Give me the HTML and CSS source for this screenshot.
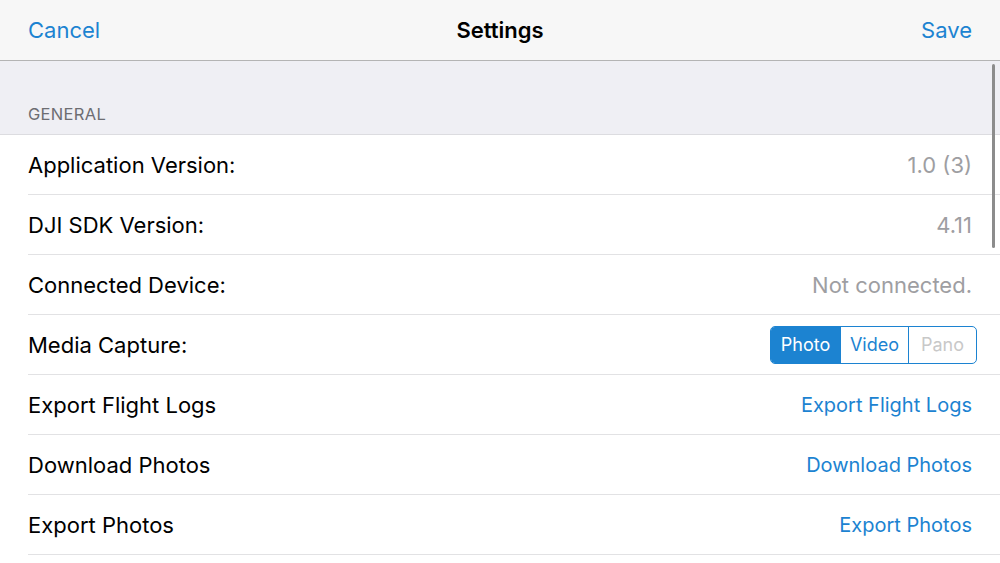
FILE: index.html
```html
<!DOCTYPE html>
<html lang="en">
<head>
    <meta charset="UTF-8">
    <meta name="viewport" content="width=device-width, initial-scale=1.0">
    <title>Settings</title>
    <link rel="stylesheet" href="styles.css">
</head>
<body>
    <div class="navbar">
        <a class="nav-btn" href="#">Cancel</a>
        <div class="nav-title">Settings</div>
        <a class="nav-btn" href="#">Save</a>
    </div>
    <div class="content">
        <div class="section-header">GENERAL</div>
        <div class="row">
            <span class="label">Application Version:</span>
            <span class="value">1.0 (3)</span>
        </div>
        <div class="row">
            <span class="label">DJI SDK Version:</span>
            <span class="value">4.11</span>
        </div>
        <div class="row">
            <span class="label">Connected Device:</span>
            <span class="value">Not connected.</span>
        </div>
        <div class="row">
            <span class="label">Media Capture:</span>
            <div class="segmented">
                <span class="segment active">Photo</span>
                <span class="segment">Video</span>
                <span class="segment disabled">Pano</span>
            </div>
        </div>
        <div class="row">
            <span class="label">Export Flight Logs</span>
            <a class="action" href="#">Export Flight Logs</a>
        </div>
        <div class="row">
            <span class="label">Download Photos</span>
            <a class="action" href="#">Download Photos</a>
        </div>
        <div class="row">
            <span class="label">Export Photos</span>
            <a class="action" href="#">Export Photos</a>
        </div>
        <div class="scroll-indicator"></div>
    </div>
</body>
</html>
```

FILE: styles.css
```css
body {
    font-family: Inter, "Noto Sans", sans-serif;
    margin: 0;
    padding: 0;
    background-color: #fff;
    color: #000;
    overflow: hidden;
}
.navbar {
    height: 60px;
    background-color: #f7f7f7;
    border-bottom: 1px solid #b4b4b4;
    display: flex;
    align-items: center;
    justify-content: space-between;
    padding: 0 28px;
}
.nav-btn {
    color: #1c83d1;
    text-decoration: none;
    font-size: 22px;
    width: 120px;
}
.nav-btn:last-child {
    text-align: right;
}
.nav-title {
    font-size: 22px;
    font-weight: 600;
}
.content {
    position: relative;
}
.section-header {
    background-color: #efeff4;
    height: 74px;
    box-sizing: border-box;
    padding: 0 28px 10px;
    display: flex;
    align-items: flex-end;
    font-size: 16.5px;
    color: #6d6d72;
    letter-spacing: 0.3px;
    border-bottom: 1px solid #dcdce0;
}
.row {
    height: 59px;
    margin-left: 28px;
    padding-right: 28px;
    border-bottom: 1px solid #e2e2e4;
    display: flex;
    align-items: center;
    justify-content: space-between;
    font-size: 22px;
}
.value {
    color: #9e9ea2;
}
.action {
    color: #1c83d1;
    text-decoration: none;
    font-size: 20px;
}
.segmented {
    display: flex;
    border: 1px solid #1c83d1;
    border-radius: 5px;
    overflow: hidden;
    margin-right: -5px;
    height: 38px;
    box-sizing: border-box;
}
.segment {
    width: 67px;
    display: flex;
    align-items: center;
    justify-content: center;
    font-size: 18px;
    color: #1c83d1;
    border-left: 1px solid #1c83d1;
}
.segment:first-child {
    border-left: none;
    width: 69px;
}
.segment.active {
    background-color: #1c83d1;
    color: #fff;
}
.segment.disabled {
    color: #c8c8c8;
}
.scroll-indicator {
    position: absolute;
    top: 3px;
    right: 5px;
    width: 3px;
    height: 184px;
    border-radius: 2px;
    background-color: #8c8c8c;
}
```
